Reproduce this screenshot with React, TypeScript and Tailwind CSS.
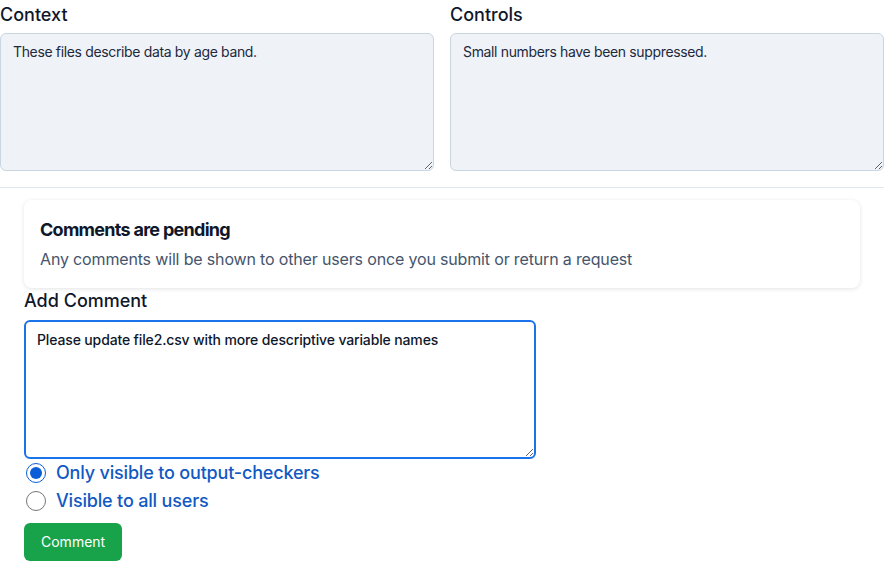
import { useState } from "react"

export default function App() {
  const [visibility, setVisibility] = useState("checkers")
  const [comment, setComment] = useState("Please update file2.csv with more descriptive variable names")

  return (
    <div className="min-h-screen bg-white font-['Inter',sans-serif] text-slate-900">
      <div className="grid grid-cols-2 gap-4 pb-4">
        <div>
          <label className="mb-[4px] block pt-px text-lg font-medium leading-7">Context</label>
          <textarea
            readOnly
            defaultValue="These files describe data by age band."
            className="block h-[138px] w-full rounded-md border border-slate-300 bg-[#eff3f8] px-3 py-2 text-sm tracking-[-0.025em] text-slate-800"
          />
        </div>
        <div>
          <label className="mb-[4px] block pt-px text-lg font-medium leading-7">Controls</label>
          <textarea
            readOnly
            defaultValue="Small numbers have been suppressed."
            className="block h-[138px] w-full rounded-md border border-slate-300 bg-[#eff3f8] px-3 py-2 text-sm tracking-[-0.025em] text-slate-800"
          />
        </div>
      </div>

      <div className="border-t border-slate-200 px-6 pt-3">
        <div className="rounded-lg bg-white px-4 pt-4 pb-[17px] shadow-[0_1px_4px_rgba(15,23,42,0.12)]">
          <h2 className="text-lg font-bold leading-7 tracking-[-0.04em]">Comments are pending</h2>
          <p className="mt-[3px] text-base leading-6 tracking-[-0.01em] text-slate-600">
            Any comments will be shown to other users once you submit or return a request
          </p>
        </div>

        <form className="mt-px w-[512px]" onSubmit={(e) => e.preventDefault()}>
          <label className="mb-[7px] block text-lg font-medium leading-6">Add Comment</label>
          <textarea
            value={comment}
            onChange={(e) => setComment(e.target.value)}
            className="block h-[139px] w-full rounded-md border-2 border-[#1a73e8] px-[11px] py-2 text-sm font-medium tracking-[-0.01em] text-slate-900 outline-none"
          />
          <div className="mt-1 space-y-2">
            <label className="flex items-center gap-2.5 text-lg font-medium leading-5 tracking-[-0.01em] text-[#1259c3]">
              <input
                type="radio"
                name="visibility"
                checked={visibility === "checkers"}
                onChange={() => setVisibility("checkers")}
                className="ml-0.5 h-5 w-5 accent-[#0b5ed7]"
              />
              Only visible to output-checkers
            </label>
            <label className="flex items-center gap-2.5 text-lg font-medium leading-5 tracking-[-0.01em] text-[#1259c3]">
              <input
                type="radio"
                name="visibility"
                checked={visibility === "all"}
                onChange={() => setVisibility("all")}
                className="ml-0.5 h-5 w-5 accent-[#0b5ed7]"
              />
              Visible to all users
            </label>
          </div>
          <button
            type="submit"
            className="mt-3 h-[38px] rounded-md bg-[#18a34a] px-[17px] text-sm text-white"
          >
            Comment
          </button>
        </form>
      </div>
    </div>
  )
}
